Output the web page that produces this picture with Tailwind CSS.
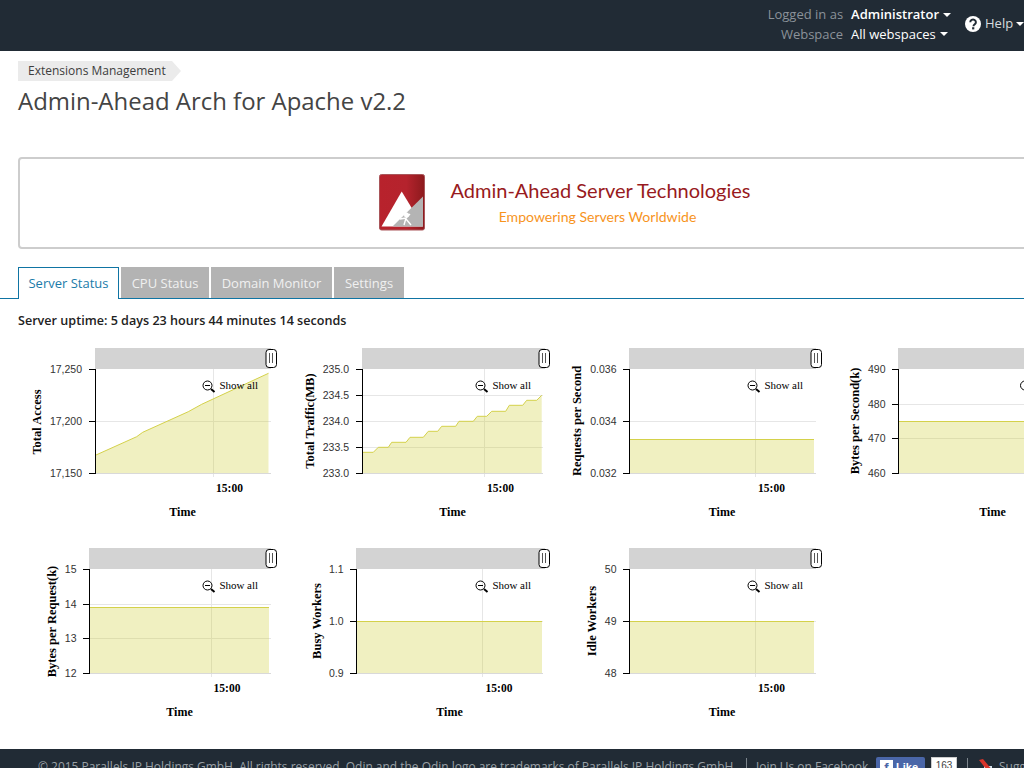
<!DOCTYPE html>
<html lang="en">
<head>
<meta charset="utf-8">
<title>Admin-Ahead Arch for Apache</title>
<script src="https://cdn.jsdelivr.net/npm/@tailwindcss/browser@4"></script>
</head>
<body class="m-0 bg-white overflow-hidden">
<div class="w-[1024px] h-[768px] overflow-hidden flex flex-col font-['Open_Sans',sans-serif]">

  <header class="h-[51px] shrink-0 bg-[#212b35] flex justify-end text-[13px] leading-[19.5px]">
    <div class="grid grid-cols-[auto_auto] gap-x-[8px] pt-[5px] h-fit">
      <span class="text-right text-[#8b9299]">Logged in as</span>
      <span class="font-semibold text-white flex items-center gap-[4px]">Administrator <i class="w-0 h-0 border-x-[4px] border-x-transparent border-t-[4px] border-t-white"></i></span>
      <span class="text-right text-[#8b9299]">Webspace</span>
      <span class="text-white flex items-center gap-[4px]">All webspaces <i class="w-0 h-0 border-x-[4px] border-x-transparent border-t-[4px] border-t-white"></i></span>
    </div>
    <div class="w-[59px] ml-[14px] shrink-0 flex items-center gap-[4px] text-[#d8dbde] h-[48px] overflow-hidden">
      <svg class="shrink-0" width="16" height="16" viewBox="0 0 16 16"><circle cx="8" cy="8" r="8" fill="#fff"/><path d="M5.300 6.200a2.800 2.600 0 1 1 4.400 2.100c-1 .7-1.200 1-1.200 1.900" fill="none" stroke="#212b35" stroke-width="2"/><rect x="7.100" y="11.200" width="2.200" height="2.200" fill="#212b35"/></svg>
      <span>Help</span>
      <i class="ml-[-1px] w-0 h-0 shrink-0 border-x-[4px] border-x-transparent border-t-[4px] border-t-white"></i>
    </div>
  </header>

  <main class="flex-1 min-h-0 overflow-hidden">
    <nav class="mt-[10px] ml-[18px] h-[20px] flex w-fit">
      <span class="h-[20px] pl-[10px] pr-[6px] bg-[#ebebeb] text-[12px] leading-[20px] text-[#3d3d3d]">Extensions Management</span>
      <i class="w-0 h-0 border-y-[10px] border-y-transparent border-l-[9px] border-l-[#ebebeb]"></i>
    </nav>
    <h1 class="ml-[18px] mt-[3px] h-[34px] text-[23.95px] leading-[34px] font-normal text-[#444] whitespace-nowrap">Admin-Ahead Arch for Apache v2.2</h1>

    <div class="ml-[18px] mt-[39px] w-[1094px] h-[92px] border-2 border-[#cdcdcd] rounded-[4px] flex items-center justify-center gap-[25px]">
      <svg class="-translate-y-[1px]" width="46" height="57" viewBox="379 174 46 57">
        <defs><linearGradient id="lg" x1="0" y1="0" x2="1" y2="0"><stop offset="0" stop-color="#b8222c"/><stop offset=".6" stop-color="#b5232d"/><stop offset="1" stop-color="#8c1a1d"/></linearGradient></defs>
        <rect x="379.500" y="174.500" width="45" height="55.500" rx="2" fill="url(#lg)" stroke="#a9565a"/>
        <path d="M381.500 226.500 L401.700 191.500 L423 226.500Z" fill="#fff"/>
        <path d="M423 196.500 L392.500 226.500 L423 226.500Z" fill="#b4b4b4"/>
        <circle cx="406.500" cy="215" r="2.500" fill="#fff"/>
        <path d="M400 219 L406 218 L410 214 M406 218 L404 225 M406 219 L411 225" fill="none" stroke="#fff" stroke-width="1.400"/>
      </svg>
      <div class="w-[301px] font-['Lato',sans-serif] flex flex-col items-center">
        <span class="-translate-y-[2px] text-[20px] leading-[28px] text-[#981a20] whitespace-nowrap">Admin-Ahead Server Technologies</span>
        <span class="pr-[6px] text-[14.05px] leading-[22px] text-[#f7941d] whitespace-nowrap">Empowering Servers Worldwide</span>
      </div>
    </div>

    <div class="mt-[18px] h-[32px] w-[1024px] pl-[18px] flex gap-[2px] items-start border-b border-[#0f74a3] text-[13px] leading-[32px]">
      <span class="w-[101px] h-[32px] bg-white border border-b-0 border-[#0f74a3] text-[#1b7ba9] text-center leading-[31px]">Server Status</span>
      <span class="w-[88px] h-[31px] bg-[#b3b3b3] text-[#f0f0f0] text-center">CPU Status</span>
      <span class="w-[121px] h-[31px] bg-[#b3b3b3] text-[#f0f0f0] text-center">Domain Monitor</span>
      <span class="w-[70px] h-[31px] bg-[#b3b3b3] text-[#f0f0f0] text-center">Settings</span>
    </div>

    <p class="ml-[18px] mt-[12px] h-[20px] text-[12.6px] leading-[20px] font-semibold text-[#222] whitespace-nowrap">Server uptime: 5 days 23 hours 44 minutes 14 seconds</p>

    <div class="mt-[9px] ml-[18px] w-[1080px] grid grid-cols-[270px_270px_270px_270px] auto-rows-[200px]">

      <!-- Total Access -->
      <svg width="270" height="200" viewBox="18 340 270 200" font-family="Liberation Sans" font-size="10.500" fill="#333">
        <rect x="95" y="348" width="176" height="21" fill="#d3d3d3"/>
        <path d="M95 421.500H271M213.500 369V477" stroke="#e6e6e6" fill="none"/>
        <path d="M96 455 136.700 436.700 142.700 432.300 188.300 411.700 201.700 404.300 268.500 373.300V473.500H96Z" fill="#cc3" fill-opacity=".3"/>
        <path d="M96 455 136.700 436.700 142.700 432.300 188.300 411.700 201.700 404.300 268.500 373.300" stroke="#d4d14a" fill="none"/>
        <path d="M95 473.500H271" stroke="#d9d9d9"/>
        <path d="M95.500 369V474M89 369.500H95.500M89 421.500H95.500M89 473.500H95.500" stroke="#000" fill="none"/>
        <text x="82" y="373" text-anchor="end">17,250</text><text x="82" y="425" text-anchor="end">17,200</text><text x="82" y="477" text-anchor="end">17,150</text>
        <g font-family="Liberation Serif" fill="#000">
          <text x="229.500" y="492" text-anchor="middle" font-weight="700" font-size="11.500">15:00</text>
          <text x="182.500" y="516" text-anchor="middle" font-weight="700" font-size="12">Time</text>
          <text transform="translate(41 422) rotate(-90)" text-anchor="middle" font-weight="700" font-size="12.500">Total Access</text>
          <text x="219.500" y="389" font-size="11" textLength="38.500">Show all</text>
        </g>
        <g fill="none" stroke="#000"><circle cx="207.500" cy="385.500" r="4.500"/><path d="M205 385.500h5"/><path d="M211 389l3.500 3" stroke-width="2"/></g>
        <rect x="266" y="349.500" width="10.500" height="18" rx="3" fill="#fff" stroke="#000"/><path d="M269.500 353v10M272.500 353v10" stroke="#555"/>
      </svg>

      <!-- Total Traffic -->
      <svg width="270" height="200" viewBox="288 340 270 200" font-family="Liberation Sans" font-size="10.500" fill="#333">
        <rect x="362" y="348" width="183" height="21" fill="#d3d3d3"/>
        <path d="M362 395.500H543M362 421.500H543M362 447.500H543M484.500 369V477" stroke="#e6e6e6" fill="none"/>
        <path d="M362.700 452.300 373.300 452.300 378.300 447.300 388.300 447.300 391.700 442.300 406 442.300 410 437.300 423.300 437.300 428.300 431.300 437.700 431.300 441.700 426.300 455.700 426.300 459 421.300 473.300 421.300 477.300 416.300 486.700 416.300 491.700 411.300 505.700 411.300 509.300 405.300 522.700 405.300 526.700 400.300 536.700 400.300 541.700 395.300V473.500H362.700Z" fill="#cc3" fill-opacity=".3"/>
        <path d="M362.700 452.300 373.300 452.300 378.300 447.300 388.300 447.300 391.700 442.300 406 442.300 410 437.300 423.300 437.300 428.300 431.300 437.700 431.300 441.700 426.300 455.700 426.300 459 421.300 473.300 421.300 477.300 416.300 486.700 416.300 491.700 411.300 505.700 411.300 509.300 405.300 522.700 405.300 526.700 400.300 536.700 400.300 541.700 395.300" stroke="#d4d14a" fill="none"/>
        <path d="M362 473.500H543" stroke="#d9d9d9"/>
        <path d="M362.500 369V474M356 369.500H362.500M356 395.500H362.500M356 421.500H362.500M356 447.500H362.500M356 473.500H362.500" stroke="#000" fill="none"/>
        <text x="349" y="373" text-anchor="end">235.0</text><text x="349" y="399" text-anchor="end">234.5</text><text x="349" y="425" text-anchor="end">234.0</text><text x="349" y="451" text-anchor="end">233.5</text><text x="349" y="477" text-anchor="end">233.0</text>
        <g font-family="Liberation Serif" fill="#000">
          <text x="500.500" y="492" text-anchor="middle" font-weight="700" font-size="11.500">15:00</text>
          <text x="452.500" y="516" text-anchor="middle" font-weight="700" font-size="12">Time</text>
          <text transform="translate(314 421) rotate(-90)" text-anchor="middle" font-weight="700" font-size="12.500">Total Traffic(MB)</text>
          <text x="492.500" y="389" font-size="11" textLength="38.500">Show all</text>
        </g>
        <g fill="none" stroke="#000"><circle cx="480.500" cy="385.500" r="4.500"/><path d="M478 385.500h5"/><path d="M484 389l3.500 3" stroke-width="2"/></g>
        <rect x="539" y="349.500" width="10.500" height="18" rx="3" fill="#fff" stroke="#000"/><path d="M542.500 353v10M545.500 353v10" stroke="#555"/>
      </svg>

      <!-- Requests per Second -->
      <svg width="270" height="200" viewBox="558 340 270 200" font-family="Liberation Sans" font-size="10.500" fill="#333">
        <rect x="629" y="348" width="187" height="21" fill="#d3d3d3"/>
        <path d="M629 421.500H816M755.500 369V477" stroke="#e6e6e6" fill="none"/>
        <path d="M630 439.500H814V473.500H630Z" fill="#cc3" fill-opacity=".3"/>
        <path d="M630 439.500H814" stroke="#d4d14a"/>
        <path d="M629 473.500H816" stroke="#d9d9d9"/>
        <path d="M629.500 369V474M623 369.500H629.500M623 421.500H629.500M623 473.500H629.500" stroke="#000" fill="none"/>
        <text x="616.500" y="373" text-anchor="end">0.036</text><text x="616.500" y="425" text-anchor="end">0.034</text><text x="616.500" y="477" text-anchor="end">0.032</text>
        <g font-family="Liberation Serif" fill="#000">
          <text x="771.500" y="492" text-anchor="middle" font-weight="700" font-size="11.500">15:00</text>
          <text x="722" y="516" text-anchor="middle" font-weight="700" font-size="12">Time</text>
          <text transform="translate(581 421) rotate(-90)" text-anchor="middle" font-weight="700" font-size="12.500">Requests per Second</text>
          <text x="764.500" y="389" font-size="11" textLength="38.500">Show all</text>
        </g>
        <g fill="none" stroke="#000"><circle cx="752.500" cy="385.500" r="4.500"/><path d="M750 385.500h5"/><path d="M756 389l3.500 3" stroke-width="2"/></g>
        <rect x="811" y="349.500" width="10.500" height="18" rx="3" fill="#fff" stroke="#000"/><path d="M814.500 353v10M817.500 353v10" stroke="#555"/>
      </svg>

      <!-- Bytes per Second -->
      <svg width="270" height="200" viewBox="828 340 270 200" font-family="Liberation Sans" font-size="10.500" fill="#333">
        <rect x="898" y="348" width="190" height="21" fill="#d3d3d3"/>
        <path d="M898 404.500H1088M898 438.500H1088" stroke="#e6e6e6" fill="none"/>
        <path d="M899 421.500H1088V473.500H899Z" fill="#cc3" fill-opacity=".3"/>
        <path d="M899 421.500H1088" stroke="#d4d14a"/>
        <path d="M898 473.500H1088" stroke="#d9d9d9"/>
        <path d="M898.500 369V474M892 369.500H898.500M892 404.500H898.500M892 438.500H898.500M892 473.500H898.500" stroke="#000" fill="none"/>
        <text x="885.500" y="373" text-anchor="end">490</text><text x="885.500" y="408" text-anchor="end">480</text><text x="885.500" y="442" text-anchor="end">470</text><text x="885.500" y="477" text-anchor="end">460</text>
        <g font-family="Liberation Serif" fill="#000">
          <text x="992.500" y="516" text-anchor="middle" font-weight="700" font-size="12">Time</text>
          <text transform="translate(859 421) rotate(-90)" text-anchor="middle" font-weight="700" font-size="12.500">Bytes per Second(k)</text>
        </g>
        <g fill="none" stroke="#000"><circle cx="1025" cy="385.500" r="4.500"/></g>
      </svg>

      <!-- Bytes per Request -->
      <svg width="270" height="200" viewBox="18 540 270 200" font-family="Liberation Sans" font-size="10.500" fill="#333">
        <rect x="89" y="548" width="182" height="21" fill="#d3d3d3"/>
        <path d="M89 604.500H271M89 638.500H271M211.500 569V677" stroke="#e6e6e6" fill="none"/>
        <path d="M90 607.500H269V673.500H90Z" fill="#cc3" fill-opacity=".3"/>
        <path d="M90 607.500H269" stroke="#d4d14a"/>
        <path d="M89 673.500H271" stroke="#d9d9d9"/>
        <path d="M89.500 569V674M83 569.500H89.500M83 604.500H89.500M83 638.500H89.500M83 673.500H89.500" stroke="#000" fill="none"/>
        <text x="76.500" y="573" text-anchor="end">15</text><text x="76.500" y="608" text-anchor="end">14</text><text x="76.500" y="642" text-anchor="end">13</text><text x="76.500" y="677" text-anchor="end">12</text>
        <g font-family="Liberation Serif" fill="#000">
          <text x="227" y="692" text-anchor="middle" font-weight="700" font-size="11.500">15:00</text>
          <text x="179.500" y="716" text-anchor="middle" font-weight="700" font-size="12">Time</text>
          <text transform="translate(56 621.500) rotate(-90)" text-anchor="middle" font-weight="700" font-size="12.500">Bytes per Request(k)</text>
          <text x="219.500" y="589" font-size="11" textLength="38.500">Show all</text>
        </g>
        <g fill="none" stroke="#000"><circle cx="207.500" cy="585.500" r="4.500"/><path d="M205 585.500h5"/><path d="M211 589l3.500 3" stroke-width="2"/></g>
        <rect x="266" y="549.500" width="10.500" height="18" rx="3" fill="#fff" stroke="#000"/><path d="M269.500 553v10M272.500 553v10" stroke="#555"/>
      </svg>

      <!-- Busy Workers -->
      <svg width="270" height="200" viewBox="288 540 270 200" font-family="Liberation Sans" font-size="10.500" fill="#333">
        <rect x="356" y="548" width="189" height="21" fill="#d3d3d3"/>
        <path d="M356 621.500H543M482.500 569V677" stroke="#e6e6e6" fill="none"/>
        <path d="M357 621.500H542V673.500H357Z" fill="#cc3" fill-opacity=".3"/>
        <path d="M357 621.500H542" stroke="#d4d14a"/>
        <path d="M356 673.500H543" stroke="#d9d9d9"/>
        <path d="M356.500 569V674M350 569.500H356.500M350 621.500H356.500M350 673.500H356.500" stroke="#000" fill="none"/>
        <text x="343.500" y="573" text-anchor="end">1.1</text><text x="343.500" y="625" text-anchor="end">1.0</text><text x="343.500" y="677" text-anchor="end">0.9</text>
        <g font-family="Liberation Serif" fill="#000">
          <text x="499" y="692" text-anchor="middle" font-weight="700" font-size="11.500">15:00</text>
          <text x="449.500" y="716" text-anchor="middle" font-weight="700" font-size="12">Time</text>
          <text transform="translate(321 621) rotate(-90)" text-anchor="middle" font-weight="700" font-size="12.500">Busy Workers</text>
          <text x="492.500" y="589" font-size="11" textLength="38.500">Show all</text>
        </g>
        <g fill="none" stroke="#000"><circle cx="480.500" cy="585.500" r="4.500"/><path d="M478 585.500h5"/><path d="M484 589l3.500 3" stroke-width="2"/></g>
        <rect x="539" y="549.500" width="10.500" height="18" rx="3" fill="#fff" stroke="#000"/><path d="M542.500 553v10M545.500 553v10" stroke="#555"/>
      </svg>

      <!-- Idle Workers -->
      <svg width="270" height="200" viewBox="558 540 270 200" font-family="Liberation Sans" font-size="10.500" fill="#333">
        <rect x="629" y="548" width="187" height="21" fill="#d3d3d3"/>
        <path d="M629 621.500H816M755.500 569V677" stroke="#e6e6e6" fill="none"/>
        <path d="M630 621.500H814V673.500H630Z" fill="#cc3" fill-opacity=".3"/>
        <path d="M630 621.500H814" stroke="#d4d14a"/>
        <path d="M629 673.500H816" stroke="#d9d9d9"/>
        <path d="M629.500 569V674M623 569.500H629.500M623 621.500H629.500M623 673.500H629.500" stroke="#000" fill="none"/>
        <text x="616.500" y="573" text-anchor="end">50</text><text x="616.500" y="625" text-anchor="end">49</text><text x="616.500" y="677" text-anchor="end">48</text>
        <g font-family="Liberation Serif" fill="#000">
          <text x="771.500" y="692" text-anchor="middle" font-weight="700" font-size="11.500">15:00</text>
          <text x="722" y="716" text-anchor="middle" font-weight="700" font-size="12">Time</text>
          <text transform="translate(596 621) rotate(-90)" text-anchor="middle" font-weight="700" font-size="12.500">Idle Workers</text>
          <text x="764.500" y="589" font-size="11" textLength="38.500">Show all</text>
        </g>
        <g fill="none" stroke="#000"><circle cx="752.500" cy="585.500" r="4.500"/><path d="M750 585.500h5"/><path d="M756 589l3.500 3" stroke-width="2"/></g>
        <rect x="811" y="549.500" width="10.500" height="18" rx="3" fill="#fff" stroke="#000"/><path d="M814.500 553v10M817.500 553v10" stroke="#555"/>
      </svg>
    </div>
  </main>

  <footer class="h-[19px] shrink-0 bg-[#212b35] pl-[38px] pt-[9px] flex items-start text-[11.96px] leading-[18px] text-[#9aa1a7] whitespace-nowrap overflow-hidden">
    <span class="w-[708px] shrink-0">© 2015 Parallels IP Holdings GmbH. All rights reserved. Odin and the Odin logo are trademarks of Parallels IP Holdings GmbH.</span>
    <span class="w-px h-[18px] bg-[#7c858c] shrink-0"></span>
    <span class="ml-[9px] w-[120px] shrink-0">Join Us on Facebook</span>
    <span class="mt-[-1px] w-[49px] h-[18px] shrink-0 rounded-[2px] bg-[#4a66a8] flex items-start pl-[4px] pt-[3px] gap-[3px] text-white font-bold text-[11px] leading-[14px] font-['Liberation_Sans',sans-serif]"><i class="w-[13px] h-[14px] bg-white text-[#4a66a8] not-italic text-center text-[13px] leading-[15px]">f</i>Like</span>
    <span class="ml-[6px] mt-[-1px] w-[26px] h-[18px] shrink-0 bg-white border border-[#ccc] text-[#444] text-[10px] leading-[16px] text-center font-['Liberation_Sans',sans-serif]">163</span>
    <span class="ml-[10px] w-px h-[18px] bg-[#7c858c] shrink-0"></span>
    <svg class="ml-[10px] shrink-0" width="16" height="18" viewBox="0 0 16 18"><path d="M6 8h8v10H6Z" fill="#cfe0ea"/><path d="M1 2l4-1 10 12-3 3Z" fill="#d8342a"/></svg>
    <span class="ml-[5px]">Suggest an Idea</span>
  </footer>
</div>
</body>
</html>
